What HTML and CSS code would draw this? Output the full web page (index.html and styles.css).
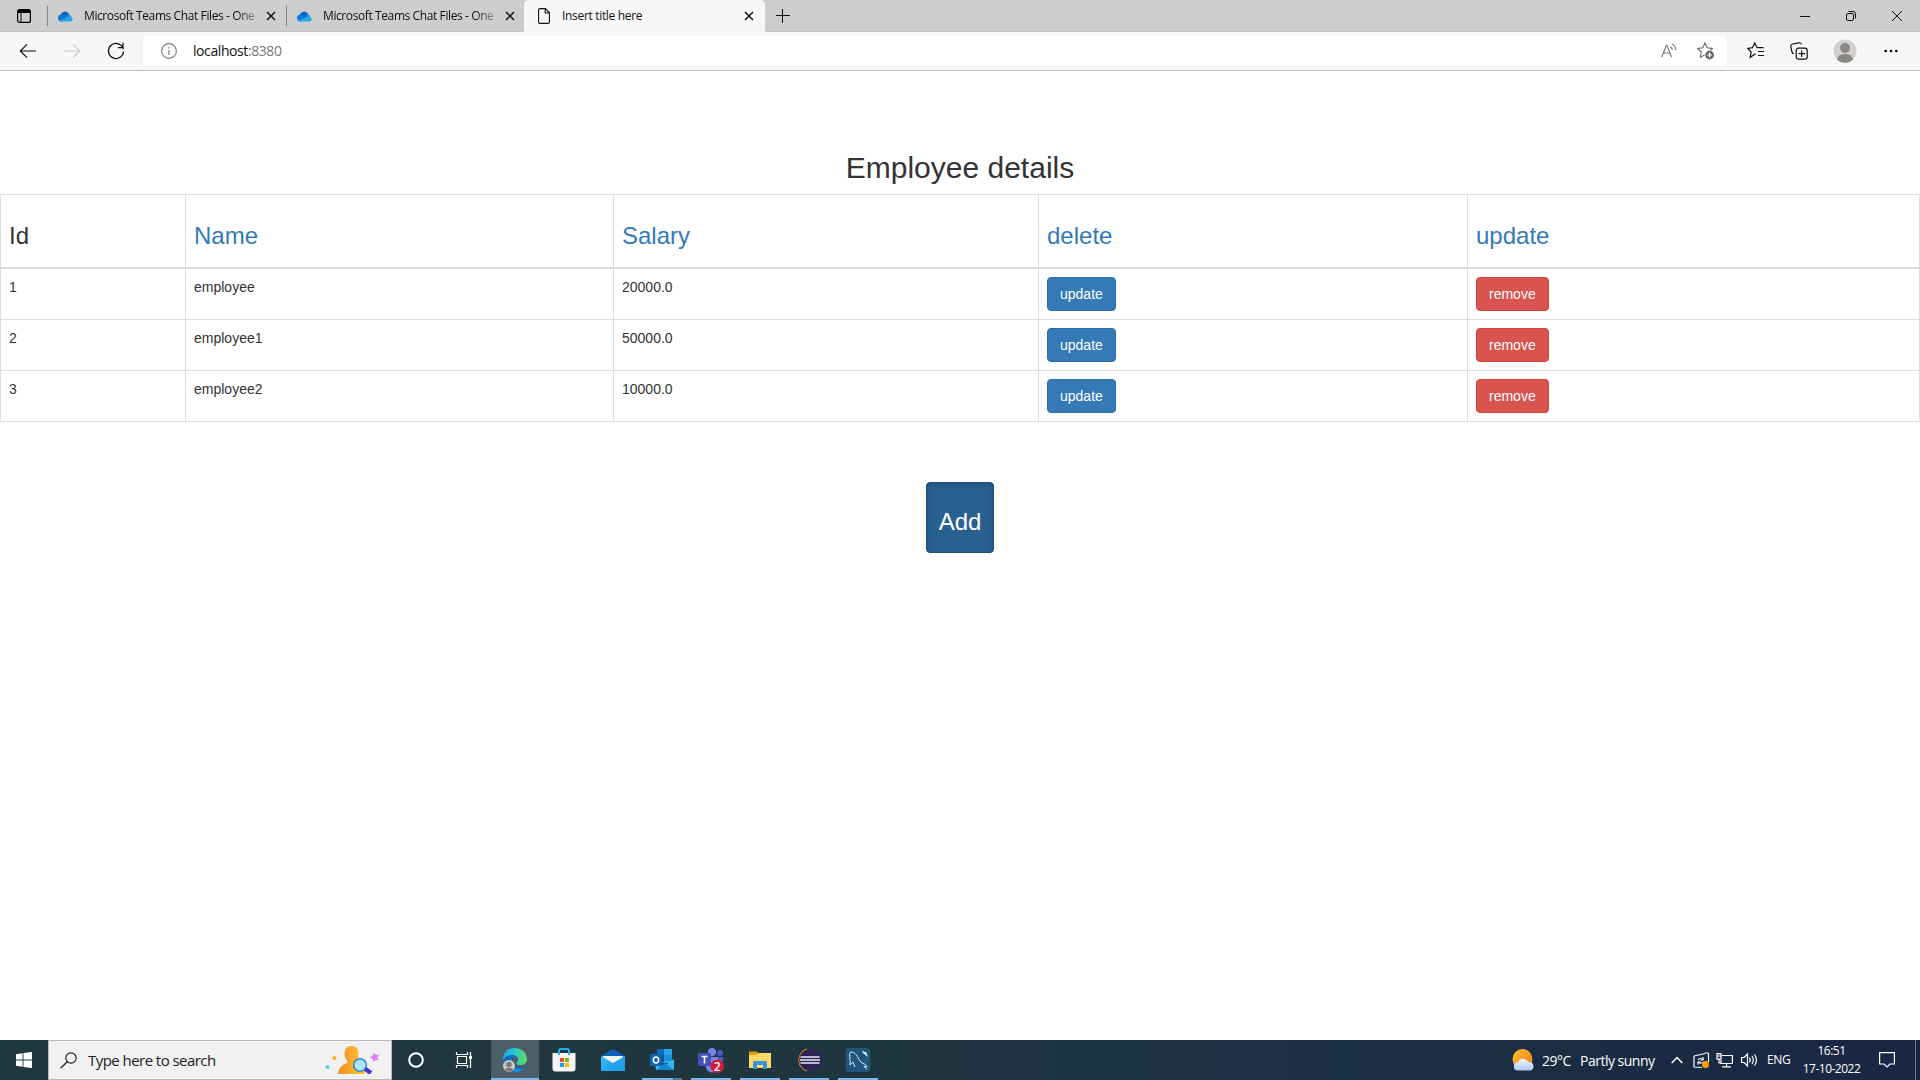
FILE: index.html
```html
<!DOCTYPE html>
<html lang="en">
<head>
<meta charset="utf-8">
<title>Insert title here</title>
<link rel="stylesheet" href="styles.css">
</head>
<body>
<svg class="defs" width="0" height="0">
  <defs>
    <linearGradient id="sun" x1="0" y1="0" x2="1" y2="1"><stop offset="0" stop-color="#ffc12e"/><stop offset="1" stop-color="#f27a1a"/></linearGradient>
    <linearGradient id="cloud" x1="0" y1="0" x2="0" y2="1"><stop offset="0" stop-color="#f4f8ff"/><stop offset="1" stop-color="#a9c8f5"/></linearGradient>
    <linearGradient id="gold" x1="0" y1="0" x2="1" y2="0"><stop offset="0" stop-color="#f08c1c"/><stop offset="1" stop-color="#ffc93a"/></linearGradient>
    <linearGradient id="edgeTop" x1="0" y1="0" x2="1" y2="0"><stop offset="0" stop-color="#1fa5e0"/><stop offset=".5" stop-color="#2cc4cf"/><stop offset="1" stop-color="#64dc55"/></linearGradient>
    <linearGradient id="mailFlap" x1="0" y1="0" x2="1" y2="1"><stop offset="0" stop-color="#3ac4f5"/><stop offset="1" stop-color="#168ae0"/></linearGradient>
    <symbol id="onedrive" viewBox="0 0 16 11">
      <path d="M2.5 5.5A4.6 4.6 0 0 1 10.5 2.2L12 5 4 8z" fill="#0a63bf"/>
      <path d="M9 3.2A3.9 3.9 0 0 1 13.2 6L6 8z" fill="#1785d8"/>
      <path d="M3.6 10.5A3.5 3.5 0 0 1 0 7.1 3.3 3.3 0 0 1 5.2 4.2L12 8z" fill="#0f78d4"/>
      <path d="M1.2 9.4 9 6.5A3.6 3.6 0 0 1 12.6 5.6 2.6 2.6 0 0 1 13.2 10.5H3.6A3.5 3.5 0 0 1 1.2 9.4z" fill="#28a8ea"/>
    </symbol>
    <symbol id="close" viewBox="0 0 10 10"><path d="M1 1l8 8M9 1L1 9" stroke="#111" stroke-width="1.5" fill="none"/></symbol>
  </defs>
</svg>

<header class="browser">
  <div class="tabstrip">
    <div class="tab-actions">
      <svg width="14" height="14" viewBox="0 0 14 14"><rect x=".6" y=".6" width="12.8" height="12.8" rx="2" fill="none" stroke="#000" stroke-width="1.2"/><path d="M1 1h12v3H1z"/><path d="M4 4v9" stroke="#000"/></svg>
    </div>
    <div class="tab">
      <svg class="cloud" width="16" height="11"><use href="#onedrive"/></svg>
      <span class="tab-title faded">Microsoft Teams Chat Files - One</span>
      <svg class="close" width="10" height="10"><use href="#close"/></svg>
    </div>
    <div class="tab">
      <svg class="cloud" width="16" height="11"><use href="#onedrive"/></svg>
      <span class="tab-title faded">Microsoft Teams Chat Files - One</span>
      <svg class="close" width="10" height="10"><use href="#close"/></svg>
    </div>
    <div class="tab active">
      <svg class="page-icon" width="12" height="16" viewBox="0 0 12 16"><path d="M2 .6H7.5L11.4 4.8V14a1.4 1.4 0 0 1-1.4 1.4H2A1.4 1.4 0 0 1 .6 14V2A1.4 1.4 0 0 1 2 .6zM7.2.8V5h4" fill="none" stroke="#111" stroke-width="1.1"/></svg>
      <span class="tab-title">Insert title here</span>
      <svg class="close" width="10" height="10"><use href="#close"/></svg>
    </div>
    <svg class="new-tab" width="14" height="14" viewBox="0 0 14 14"><path d="M6.5 0v14M0 6.5h14" stroke="#111" fill="none"/></svg>
    <div class="window-controls">
      <svg width="46" height="32" viewBox="0 0 46 32"><path d="M18 16.5h10" stroke="#111"/></svg>
      <svg width="46" height="32" viewBox="0 0 46 32"><g fill="none" stroke="#111"><rect x="18.5" y="13.5" width="7" height="7" rx="1.5"/><path d="M20.5 11.5h4.5a2.5 2.5 0 0 1 2.5 2.5v4.5"/></g></svg>
      <svg width="46" height="32" viewBox="0 0 46 32"><path d="M18 11l10 10M28 11L18 21" stroke="#111"/></svg>
    </div>
  </div>
  <div class="toolbar">
    <svg class="nav" width="18" height="16" viewBox="0 0 18 16"><path d="M17 8H1.5M8 1.3L1.3 8 8 14.7" fill="none" stroke="#111" stroke-width="1.2"/></svg>
    <svg class="nav" width="18" height="16" viewBox="0 0 18 16"><path d="M1 8h15.500M10 1.3L16.7 8 10 14.7" fill="none" stroke="#cacaca" stroke-width="1.2"/></svg>
    <svg class="nav" width="18" height="18" viewBox="0 0 18 18"><path d="M16.3 7.2A7.500 7.500 0 1 0 16.500 9.500M16 .8V5.600H11" fill="none" stroke="#111" stroke-width="1.3"/></svg>
    <div class="address">
      <svg width="16" height="16" viewBox="0 0 16 16"><circle cx="8" cy="8" r="7.4" fill="none" stroke="#777" stroke-width="1.1"/><path d="M8 7v5M8 4v1.500" stroke="#777" stroke-width="1.2"/></svg>
      <span class="url">localhost<span class="port">:8380</span></span>
      <svg class="read" width="16" height="16" viewBox="0 0 16 16" fill="none" stroke="#777" stroke-width="1.1"><path d="M.7 14L5.4 2.3h.5L10.600 14M2.3 10h6.600M9.4 3.7c1.2.8 1.8 1.8 1.8 3.3M11.2.9c2.4 1.6 3.7 3.4 3.7 6.500"/></svg>
      <svg class="fav-add" width="18" height="18" viewBox="0 0 18 18"><path d="M8 1l2.2 4.7 5.2.7-3.8 3.6L12 15 8 12.8 3.4 15.2 4.3 10 .7 6.4l5.1-.7z" fill="none" stroke="#666" stroke-width="1.1"/><circle cx="12.600" cy="13" r="5" fill="#fff"/><circle cx="12.600" cy="13" r="4.4" fill="#666"/><path d="M12.600 10.600v4.8M10.2 13H15" stroke="#fff" stroke-width="1.2"/></svg>
    </div>
    <div class="tools">
      <svg width="18" height="18" viewBox="0 0 18 18" fill="none" stroke="#111" stroke-width="1.2"><path d="M8.500 11.500L7.3 12.600 3.2 15.4 4.1 10 .8 6.4l4.7-.7L7.7 1l2.4 4.7h6.4M11 9.500h6M11 13.500h6"/></svg>
      <svg width="18" height="18" viewBox="0 0 18 18" fill="none" stroke="#111" stroke-width="1.2"><path d="M3.7 11.8A2.500 2.500 0 0 1 2 10L.8 4.600A2.3 2.3 0 0 1 2.500 2L9 .8a2.2 2.2 0 0 1 2.4 1.6"/><rect x="6.2" y="6.2" width="11" height="11" rx="2.2"/><path d="M11.7 8.500v6.500M8.500 11.7H15"/></svg>
      <svg width="24" height="24" viewBox="0 0 24 24"><circle cx="12" cy="12" r="11.500" fill="#d2d0ce"/><circle cx="12" cy="9" r="5" fill="#8a8784"/><path d="M4 20.4Q5.500 15 12 15t8 5.4A11.500 11.500 0 0 1 4 20.4z" fill="#8a8784"/></svg>
      <svg width="14" height="4" viewBox="0 0 14 4"><circle cx="1.7" cy="2" r="1.3"/><circle cx="7" cy="2" r="1.3"/><circle cx="12.3" cy="2" r="1.3"/></svg>
    </div>
  </div>
</header>

<main class="page">
  <h2 class="title">Employee details</h2>
  <table class="employees">
    <colgroup><col class="c-id"><col class="c-name"><col class="c-salary"><col class="c-delete"><col></colgroup>
    <thead>
      <tr><th><h3>Id</h3></th><th><h3 class="link">Name</h3></th><th><h3 class="link">Salary</h3></th><th><h3 class="link">delete</h3></th><th><h3 class="link">update</h3></th></tr>
    </thead>
    <tbody>
      <tr><td>1</td><td>employee</td><td>20000.0</td><td><button class="btn primary">update</button></td><td><button class="btn danger">remove</button></td></tr>
      <tr><td>2</td><td>employee1</td><td>50000.0</td><td><button class="btn primary">update</button></td><td><button class="btn danger">remove</button></td></tr>
      <tr><td>3</td><td>employee2</td><td>10000.0</td><td><button class="btn primary">update</button></td><td><button class="btn danger">remove</button></td></tr>
    </tbody>
  </table>
  <div class="add-row"><button class="btn primary pressed"><h3>Add</h3></button></div>
</main>

<footer class="taskbar">
  <div class="start"><svg width="16" height="16" viewBox="0 0 16 16" fill="#fff"><path d="M0 2.2L6.600 1.3V7.600H0zM7.500 1.1L16 0V7.600H7.500zM0 8.4H6.600V14.7L0 13.8zM7.500 8.4H16V16L7.500 14.9z"/></svg></div>
  <div class="search">
    <svg width="17" height="17" viewBox="0 0 17 17"><circle cx="11" cy="6" r="5.2" fill="none" stroke="#222" stroke-width="1.2"/><path d="M7.3 9.7L.6 16.3" stroke="#222" stroke-width="1.3"/></svg>
    <span>Type here to search</span>
    <svg class="search-art" width="56" height="32" viewBox="0 0 56 32">
      <circle cx="10.500" cy="16" r="2" fill="#ffb21c"/><circle cx="3.500" cy="25" r="2" fill="#4fd3e6"/>
      <path d="M14 32Q15 23 24 20.500L22 17A7 7 0 0 1 20.500 12V11Q21 4 27.500 4T34.500 11V12Q34.500 15 33 18L32 20Q40 22 41 32z" fill="url(#gold)"/>
      <path d="M40 26l7 5" stroke="#4338c8" stroke-width="4.500"/>
      <circle cx="36" cy="23" r="6.300" fill="#a8e8fa" stroke="#3b83d6" stroke-width="1.600"/>
      <path d="M50 10.500l1.700 2.500 3.300-.2-1.600 2.700 1.500 3-3-.8-2.600 2-.4-3-3.200-1.300 3-1.500z" fill="#df78f2"/>
    </svg>
  </div>
  <div class="apps">
    <div class="app"><svg width="16" height="16" viewBox="0 0 16 16"><circle cx="8" cy="8" r="6.800" fill="none" stroke="#fff" stroke-width="2"/></svg></div>
    <div class="app task-view"><svg width="18" height="18" viewBox="0 0 18 18" fill="none" stroke="#fff" stroke-width="1.200"><path d="M2.500 5.500h9v7h-9zM1.500 1v2.500h11V1M1.500 17v-2.500h11V17M15.500 1v16"/><path d="M14 5h3v3h-3z" fill="#fff" stroke="none"/></svg></div>
    <div class="app current"><svg width="26" height="26" viewBox="0 0 26 26">
      <path d="M13 1A12 12 0 0 0 1 13Q1 24 13 25 20 25 24 20 16 22 12 18 8 14 13 9L20 7z" fill="#1069bd"/>
      <path d="M11 10Q7 16 12 21 18 24 23 20 20 25 13 25 6 21 7 14z" fill="#1790dc"/>
      <path d="M1 13C1 4 7 1 13 1 20 1 25 6 25 12 25 17 21 18 18 18 15 18 14 16 15 15 18 11 14 8 10 8 5 8 2 11 1 13z" fill="url(#edgeTop)"/>
      <circle cx="7" cy="19" r="6" fill="#c9c7c5"/><circle cx="7" cy="17.500" r="2.800" fill="#7e7b78"/><path d="M2.500 22.500Q7 18.500 11.500 22.500 7 27 2.500 22.500z" fill="#7e7b78"/>
    </svg></div>
    <div class="app"><svg width="24" height="24" viewBox="0 0 24 24"><path d="M7 6V3q0-2 2-2h6q2 0 2 2v3" fill="none" stroke="#1fb0ee" stroke-width="2"/><path d="M.5 5h23v15.500a3 3 0 0 1-3 3h-17a3 3 0 0 1-3-3z" fill="#f4f4f4"/><path d="M7 5v2M17 5v2" stroke="#1fb0ee" stroke-width="2"/><path d="M8 10h4v4H8z" fill="#f25022"/><path d="M13 10h4v4h-4z" fill="#7fba00"/><path d="M8 15h4v4H8z" fill="#00a4ef"/><path d="M13 15h4v4h-4z" fill="#ffb900"/></svg></div>
    <div class="app"><svg width="24" height="24" viewBox="0 0 24 24"><path d="M0 8L12 1l12 7v4H0z" fill="#0a60b8"/><path d="M2 8h20v9H2z" fill="#f2f2f2"/><path d="M0 8l12 7L24 8v15H0z" fill="url(#mailFlap)"/><path d="M0 23L24 8v15z" fill="#24a5ee" opacity=".6"/></svg></div>
    <div class="app split"><svg width="24" height="24" viewBox="0 0 24 24"><path d="M7 1h15v14H7z" fill="#28a8ea"/><path d="M7 1h7v6H7z" fill="#0f6cbd"/><path d="M14 7h8v6h-8z" fill="#1490df"/><path d="M7 7h7v7H7z" fill="#0a4f96"/><path d="M5 13l9 5 10-7v11H6z" fill="#35b8f1"/><path d="M6 22l9-7 9 7z" fill="#1685d1"/><rect y="6" width="12" height="12" rx="1" fill="#0f64b8"/><ellipse cx="6" cy="12" rx="2.600" ry="3" fill="none" stroke="#fff" stroke-width="1.600"/></svg></div>
    <div class="app open"><svg width="26" height="26" viewBox="0 0 26 26"><circle cx="14" cy="5" r="4" fill="#7b83eb"/><circle cx="22" cy="6" r="3" fill="#5059c9"/><path d="M17 10h8v7q0 5-5 5h-3z" fill="#5059c9"/><path d="M7 10h13v9a6 6 0 0 1-12 1z" fill="#7b83eb"/><rect y="6" width="13" height="13" rx="1" fill="#464eb8"/><path d="M3.500 9.500h6M6.500 9.500v7" stroke="#fff" stroke-width="1.600"/><circle cx="19.200" cy="19.200" r="6.800" fill="#d01c37"/><text class="badge" x="19.200" y="23.500">2</text></svg></div>
    <div class="app open"><svg width="22" height="22" viewBox="0 0 22 22"><path d="M0 2.500h8l2 2H0z" fill="#dc9a08"/><path d="M0 4h22v15H0z" fill="#ffd968"/><path d="M0 4h10l-2 2H0z" fill="#e7a60e"/><path d="M4 20v-6.500A1.500 1.500 0 0 1 5.500 12h11A1.500 1.500 0 0 1 18 13.500V20h-4v-4H8v4z" fill="#3c94d9"/></svg></div>
    <div class="app open"><svg width="24" height="24" viewBox="0 0 24 24"><path d="M10 1.500A11 11 0 0 0 10 22.500" fill="none" stroke="#f79423" stroke-width="2"/><circle cx="13" cy="12" r="10.800" fill="#2c2255"/><path d="M3.500 9h19M3 12h20M3.500 15h19" stroke="#eeeaf5" stroke-width="1.700"/></svg></div>
    <div class="app open"><svg width="24" height="24" viewBox="0 0 24 24"><rect width="24" height="24" rx="3" fill="#205780"/><path d="M4 17C5 11 2 4 5 4 11 4 12 12 16 15q4 1 5 4l-3-.5 3 3M4 17l3-3 2 5" fill="none" stroke="#dceaf2" stroke-width="1"/><path d="M16 2l1 3 5 4-2-5-2 0z" fill="#e8eff3"/></svg></div>
  </div>
  <div class="tray">
    <svg class="weather" width="24" height="24" viewBox="0 0 24 24"><circle cx="10.500" cy="11" r="10" fill="url(#sun)"/><path d="M6 22.500a4 4 0 0 1-.3-8A6 6 0 0 1 16.500 14 4.500 4.500 0 0 1 19 22.500z" fill="url(#cloud)"/></svg>
    <span class="temp">29°C</span><span class="sky">Partly sunny</span>
    <svg class="chevron" width="12" height="8" viewBox="0 0 12 8"><path d="M.7 7L6 1.500 11.300 7" fill="none" stroke="#fff" stroke-width="1.400"/></svg>
    <svg class="sync" width="17" height="17" viewBox="0 0 17 17" fill="none" stroke="#fff" stroke-width="1.200"><path d="M1 4l11-2.500M15.500 1v9M1 4v11l8 .5M12 1h3.500M5 8q2-3 5 0M10 5v3H7.500M10 10q-2 2.500-4.500 0M5 12.500V10h2.500"/><circle cx="12.500" cy="12.500" r="3.500" fill="#ff9d0a" stroke="none"/></svg>
    <svg class="network" width="17" height="15" viewBox="0 0 17 15" fill="none" stroke="#fff" stroke-width="1.200"><path d="M6 2.500h10.400v8H5V7M10.500 10.500v3M6 13.900h9M1 .6h4v5.500H1zM1 3h4M3 6v4h2"/></svg>
    <svg class="sound" width="17" height="16" viewBox="0 0 17 16" fill="none" stroke="#fff" stroke-width="1.200"><path d="M.6 5.500h2.500L6.500 2v12L3.100 10.500H.6zM8.500 5.700q1.500 2.300 0 4.600M11 4q2.700 4 0 8M13.500 2.500q4 5.500 0 11"/></svg>
    <span class="lang">ENG</span>
    <div class="clock"><span>16:51</span><span class="date">17-10-2022</span></div>
    <svg class="notice" width="16" height="16" viewBox="0 0 16 16"><path d="M.6.6h14.800v11.400H11L8 15 5 12H.6z" fill="none" stroke="#fff" stroke-width="1.200"/></svg>
    <i class="show-desktop"></i>
  </div>
</footer>
</body>
</html>
```
FILE: styles.css
```css
* { box-sizing: border-box; }
html, body { height: 100%; }
body {
  margin: 0;
  display: flex;
  flex-direction: column;
  overflow: hidden;
  background: #fff;
  color: #333;
  font: 14px/20px "Liberation Sans", Arial, sans-serif;
}
svg { display: block; flex: none; }
.defs { position: absolute; }

/* Browser frame */
.browser { flex: none; font-family: "Open Sans", "Noto Sans", sans-serif; color: #111; }
.tabstrip { display: flex; align-items: center; height: 32px; background: #cdcdcd; box-shadow: inset 0 -1px #c2c2c2; }
.tab-actions { width: 47px; padding-left: 17px; }
.tab { display: flex; align-items: center; width: 239px; height: 20px; padding-left: 10px; border-left: 1px solid #858585; }
.tab-title { width: 175px; margin-left: 10px; white-space: nowrap; font-size: 12px; line-height: 18px; letter-spacing: -.32px; }
.faded { letter-spacing: -.4px; -webkit-mask-image: linear-gradient(90deg, #000 152px, transparent 180px); mask-image: linear-gradient(90deg, #000 152px, transparent 180px); }
.close { margin-left: 7px; }
.tab.active { width: 241px; height: 32px; margin-left: -1px; padding-left: 14px; border: 0; border-radius: 5px 5px 0 0; background: #f7f7f7; }
.active .tab-title { width: 175px; margin-left: 12px; }
.new-tab { margin-left: 11px; }
.window-controls { display: flex; margin-left: auto; }
.toolbar { display: flex; align-items: center; height: 39px; border-bottom: 1px solid #bdbdbd; background: #f7f7f7; }
.nav { margin-left: 19px; }
.nav + .nav { margin-left: 26px; }
.address { display: flex; align-items: center; width: 1584px; height: 30px; margin-left: 18px; padding: 0 12px 0 18px; border-radius: 4px; background: #fff; box-shadow: 0 0 2px rgba(0,0,0,.06); }
.url { margin-left: 16px; font-size: 14px; letter-spacing: -.42px; }
.port { color: #777; }
.read { margin-left: auto; }
.fav-add { margin-left: 20px; }
.tools { display: flex; align-items: center; margin-left: 20px; gap: 25px; }
.tools svg:last-child { margin-left: 2px; }

/* Employee page */
.page { flex: 1; padding-top: 80px; }
h2, h3 { font-weight: 400; line-height: 1.1; }
.title { margin: 0 0 10px; font-size: 30px; text-align: center; }
h3 { margin: 20px 0 10px; font-size: 24px; }
.link { color: #337ab7; }
.employees { width: 1920px; border-collapse: collapse; table-layout: fixed; }
.c-id { width: 185px; }
.c-name { width: 428px; }
.c-salary { width: 425px; }
.c-delete { width: 429px; }
.employees th, .employees td { padding: 8px; border: 1px solid #ddd; text-align: left; vertical-align: top; }
.employees thead th { border-bottom-width: 2px; }
.btn { display: block; margin: 0; padding: 6px 12px; border: 1px solid; border-radius: 4px; color: #fff; font: inherit; }
.primary { background: #337ab7; border-color: #2e6da4; }
.danger { background: #d9534f; border-color: #d43f3a; }
.pressed { background: #286090; border-color: #204d74; box-shadow: inset 0 3px 5px rgba(0,0,0,.125); }
.add-row { display: flex; justify-content: center; margin-top: 60px; }

/* Windows taskbar */
.taskbar { display: flex; flex: none; height: 40px; background: linear-gradient(90deg, #203840 0%, #20363f 45%, #1b2f42 70%, #1a2744 100%); color: #fff; font-family: "Open Sans", "Noto Sans", sans-serif; }
.start { display: flex; width: 48px; padding-left: 16px; align-items: center; }
.search { display: flex; align-items: center; width: 344px; border: 1px solid #b9b9b9; background: #f1f1f1; color: #222; padding-left: 11px; font-size: 15px; letter-spacing: -.55px; }
.search span { margin-left: 11px; }
.search-art { margin: 0 11px 5px auto; align-self: flex-end; }
.apps { display: flex; }
.app { display: flex; align-items: center; justify-content: center; width: 48px; height: 40px; margin-right: 1px; }
.app:first-child { margin-right: 0; }
.task-view { margin-right: 3px; }
.current { padding-top: 2px; background: #4c5f67; border-bottom: 2px solid #76b9ed; }
.open, .split { background: linear-gradient(#76b9ed, #76b9ed) center bottom / 40px 2px no-repeat; }
.split { background-image: linear-gradient(90deg, #76b9ed 31px, #304b5a 31px, #507f9f 32px); }
.badge { fill: #fff; font: 600 12px "Open Sans", sans-serif; text-anchor: middle; }
.tray { display: flex; align-items: center; margin-left: auto; font-size: 14px; white-space: nowrap; }
.tray .weather { margin-left: 1px; }
.temp { width: 38px; margin-left: 6px; padding-top: 1px; letter-spacing: -.5px; }
.sky { width: 91px; padding-top: 1px; letter-spacing: -.5px; }
.chevron { margin-right: 10px; }
.sync { margin-right: 6px; }
.network { margin-right: 8px; }
.sound { margin-right: 9px; }
.lang { width: 29px; font-size: 12px; letter-spacing: -.4px; }
.clock { display: flex; flex-direction: column; width: 71px; margin-right: 1px; text-align: center; font-size: 12px; line-height: 18px; letter-spacing: -.5px; }
.notice { margin: 0 20px 0 11px; }
.show-desktop { width: 5px; height: 40px; border-left: 1px solid #6f7b8b; }
```
